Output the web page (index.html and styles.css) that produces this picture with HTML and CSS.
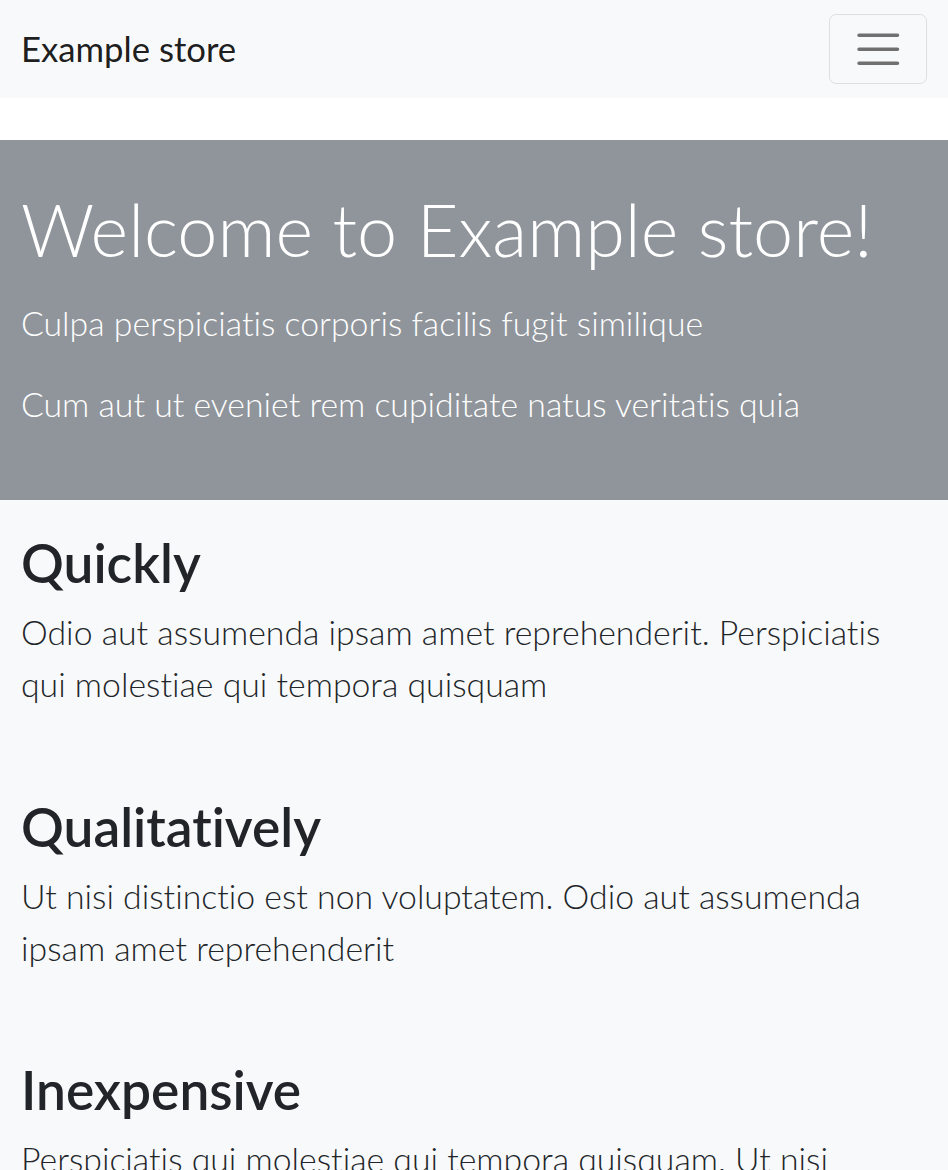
FILE: index.html
```html
<!DOCTYPE html>
<html lang="en">
<head>
<meta charset="utf-8">
<title>Example store</title>
<link rel="stylesheet" href="styles.css">
</head>
<body>
<nav class="navbar">
  <a class="brand" href="#">Example store</a>
  <button class="toggler" type="button" aria-label="Toggle navigation">
    <svg class="toggler-icon" viewBox="0 0 30 30" width="52.5" height="52.5" aria-hidden="true">
      <path d="M4 7h22M4 15h22M4 23h22" stroke="rgba(0,0,0,0.55)" stroke-linecap="round" stroke-miterlimit="10" stroke-width="2"/>
    </svg>
  </button>
</nav>
<header class="hero">
  <h1 class="hero-title">Welcome to Example store!</h1>
  <p class="lead">Culpa perspiciatis corporis facilis fugit similique</p>
  <p class="lead">Cum aut ut eveniet rem cupiditate natus veritatis quia</p>
</header>
<main class="features">
  <section class="feature">
    <h2 class="feature-title">Quickly</h2>
    <p class="feature-text">Odio aut assumenda ipsam amet reprehenderit. Perspiciatis qui molestiae qui tempora quisquam</p>
  </section>
  <section class="feature">
    <h2 class="feature-title">Qualitatively</h2>
    <p class="feature-text">Ut nisi distinctio est non voluptatem. Odio aut assumenda ipsam amet reprehenderit</p>
  </section>
  <section class="feature">
    <h2 class="feature-title">Inexpensive</h2>
    <p class="feature-text">Perspiciatis qui molestiae qui tempora quisquam. Ut nisi distinctio est non voluptatem</p>
  </section>
</main>
</body>
</html>
```
FILE: styles.css
```css
* { box-sizing: border-box; }
html, body { margin: 0; padding: 0; }
body {
  font-family: Lato, "Open Sans", sans-serif;
  font-variant-ligatures: none;
  color: #212529;
  background: #fff;
  font-size: 28px;
  line-height: 1.5;
}
.navbar {
  height: 98px;
  display: flex;
  align-items: center;
  justify-content: space-between;
  padding: 0 21px;
  background: #f8f9fa;
  margin-bottom: 42px;
}
.brand {
  font-size: 34.7px;
  line-height: 52.5px;
  color: rgba(0,0,0,0.9);
  text-decoration: none;
  padding: 8.75px 0;
}
.toggler {
  width: 98px;
  height: 70px;
  padding: 0;
  display: flex;
  align-items: center;
  justify-content: center;
  background: transparent;
  border: 1.5px solid rgba(0,0,0,0.1);
  border-radius: 7px;
}
.toggler-icon { display: block; }
.hero {
  background: #8f959b;
  color: #fff;
  padding: 46px 21px 42px;
}
.hero-title {
  margin: 0 0 25px;
  font-size: 72px;
  font-weight: 300;
  line-height: 1.2;
}
.lead {
  margin: 0 0 28px;
  font-size: 33.8px;
  font-weight: 300;
  line-height: 52.5px;
}
.features {
  background: #f8f9fa;
  padding: 30.5px 21px 1px;
}
.feature { margin-bottom: 83.8px; }
.feature-title {
  margin: 0 0 11px;
  font-size: 53.3px;
  font-weight: 600;
  line-height: 1.2;
}
.feature-text {
  margin: 0;
  font-size: 33.8px;
  font-weight: 300;
  line-height: 52.5px;
}
```
